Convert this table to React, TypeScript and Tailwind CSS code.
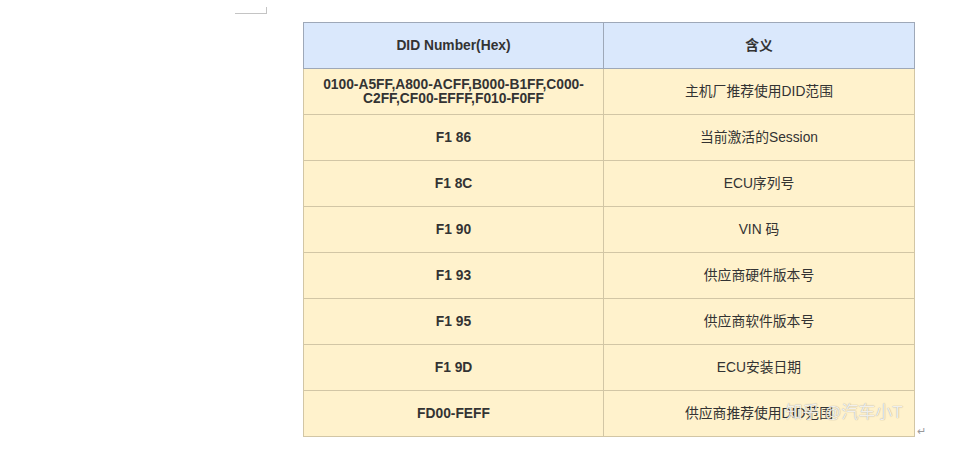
import React from "react";

interface Row {
    did: string;
    meaning: string;
}

const rows: Row[] = [
    { did: "0100-A5FF,A800-ACFF,B000-B1FF,C000-C2FF,CF00-EFFF,F010-F0FF", meaning: "主机厂推荐使用DID范围" },
    { did: "F1 86", meaning: "当前激活的Session" },
    { did: "F1 8C", meaning: "ECU序列号" },
    { did: "F1 90", meaning: "VIN 码" },
    { did: "F1 93", meaning: "供应商硬件版本号" },
    { did: "F1 95", meaning: "供应商软件版本号" },
    { did: "F1 9D", meaning: "ECU安装日期" },
    { did: "FD00-FEFF", meaning: "供应商推荐使用DID范围" },
];

export default function App() {
    return (
        <div
            className="relative w-[954px] h-[455px] bg-white text-[#333333]"
            style={{ fontFamily: '"Liberation Sans", Arial, "Noto Sans CJK SC", sans-serif' }}
        >
            {/* page corner mark */}
            <div className="absolute left-[235px] top-[7px] w-[32px] h-[7px] border-b border-r border-[#c4c4c4]" />

            <div className="pl-[303px] pt-[22px]">
                <div className="relative w-[611px]">
                    <table className="w-[611px] border-collapse text-[13.8px] leading-[14px] text-center table-fixed">
                        <colgroup>
                            <col className="w-[300px]" />
                            <col className="w-[311px]" />
                        </colgroup>
                        <thead>
                            <tr className="h-[46px] bg-[#dae8fc]">
                                <th className="border border-[#9ea8b8] font-bold">DID Number(Hex)</th>
                                <th className="border border-[#9ea8b8] font-bold">含义</th>
                            </tr>
                        </thead>
                        <tbody>
                            {rows.map((row, i) => (
                                <tr key={i} className="h-[46px] bg-[#fff2cc]">
                                    <td className="border border-[#d2c6a5] px-[12px] font-bold">{row.did}</td>
                                    <td className="border border-[#d2c6a5] px-3">{row.meaning}</td>
                                </tr>
                            ))}
                        </tbody>
                    </table>

                    {/* watermark */}
                    <div className="absolute right-[11px] bottom-[14px] text-[17px] leading-[20px] text-white/85 [text-shadow:0_0_1px_rgba(0,0,0,0.45)] pointer-events-none">
                        知乎 @汽车小T
                    </div>
                    <span className="absolute -right-[12px] bottom-[-2px] text-[11px] text-[#9a9a9a]">↵</span>
                </div>
            </div>
        </div>
    );
}
